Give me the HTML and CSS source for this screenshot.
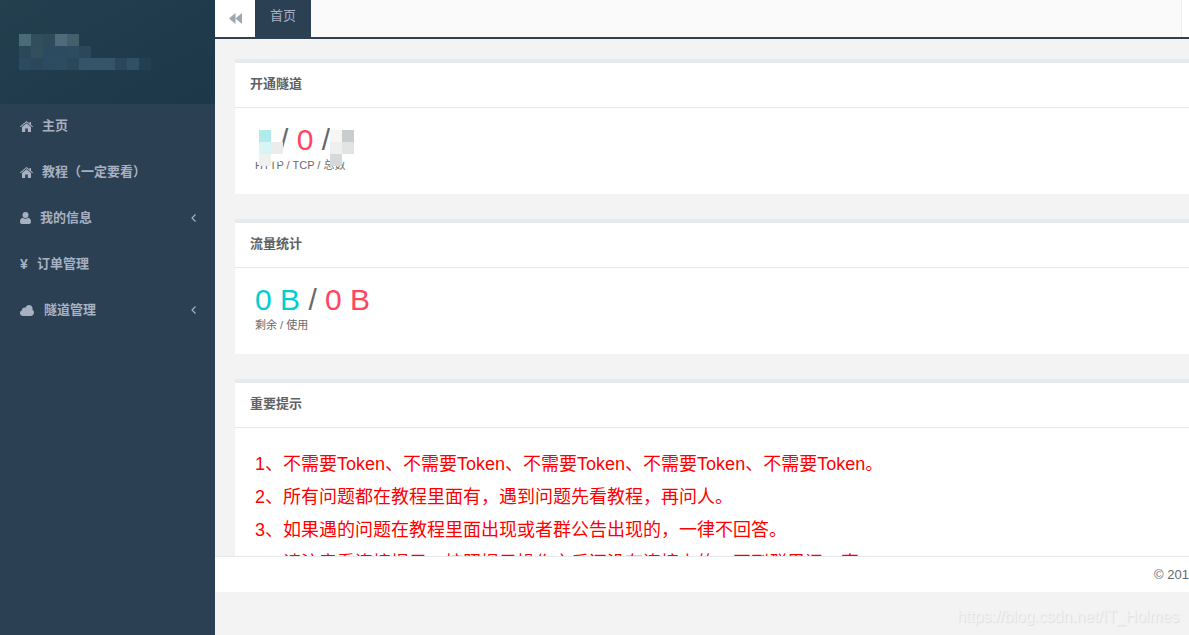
FILE: index.html
```html
<!DOCTYPE html>
<html lang="zh-CN">
<head>
  <meta charset="UTF-8">
  <title>首页</title>
  <link rel="stylesheet" href="styles.css">
</head>
<body>
  <div class="wrapper">
    <nav class="sidebar">
      <div class="logo">
        <div class="mosaic">
          <i class="m1"></i><i class="m2"></i><i class="m3"></i><i class="m4"></i><i class="m5"></i><i class="m0"></i><i class="m0"></i><i class="m0"></i><i class="m0"></i><i class="m0"></i><i class="m0"></i>
          <i class="m6"></i><i class="m7"></i><i class="m8"></i><i class="m8"></i><i class="m9"></i><i class="m10"></i><i class="m0"></i><i class="m0"></i><i class="m0"></i><i class="m0"></i><i class="m0"></i>
          <i class="m8"></i><i class="m10"></i><i class="m8"></i><i class="m9"></i><i class="m10"></i><i class="m11"></i><i class="m11"></i><i class="m11"></i><i class="m10"></i><i class="m12"></i><i class="m13"></i>
        </div>
      </div>
      <ul class="menu">
        <li>
          <svg class="icon" width="13" height="11" viewBox="0 0 13 11"><path d="M6.5 0 9.6 2.6V1H11V3.8L13 5.5 12.4 6.2 6.5 1.3 .6 6.2 0 5.5ZM6.5 2.3 11 6V11H7.8V7.6H5.2V11H2V6Z"/></svg>
          <span class="label label-home">主页</span>
        </li>
        <li>
          <svg class="icon" width="13" height="11" viewBox="0 0 13 11"><path d="M6.5 0 9.6 2.6V1H11V3.8L13 5.5 12.4 6.2 6.5 1.3 .6 6.2 0 5.5ZM6.5 2.3 11 6V11H7.8V7.6H5.2V11H2V6Z"/></svg>
          <span class="label label-home">教程（一定要看）</span>
        </li>
        <li>
          <svg class="icon" width="11" height="12" viewBox="0 0 11 12"><circle cx="5.5" cy="3" r="3"/><path d="M0 10C0 7.5 1 6 2.8 5.7 3.5 6.3 4.4 6.7 5.5 6.7S7.500 6.300 8.200 5.700C10 6 11 7.500 11 10 11 11.300 10.200 12 9 12H2C.8 12 0 11.300 0 10Z"/></svg>
          <span class="label label-user">我的信息</span>
          <svg class="arrow" width="5" height="8" viewBox="0 0 5 8"><path d="M4.500 .5 1 4 4.500 7.500" /></svg>
        </li>
        <li>
          <span class="yen">¥</span>
          <span class="label label-yen">订单管理</span>
        </li>
        <li>
          <svg class="icon" width="14" height="11" viewBox="0 0 14 11"><path d="M3.200 11C1.400 11 0 9.700 0 8 0 6.700.8 5.600 2 5.200 2 5 2 4.900 2 4.700 2 3.400 3.100 2.400 4.400 2.400 4.800 2.400 5.200 2.500 5.500 2.700 6.100 1.100 7.500 0 9.100 0 11 0 12.600 1.600 12.600 3.500 12.600 3.900 12.500 4.300 12.400 4.700 13.400 5.300 14 6.300 14 7.500 14 9.400 12.400 11 10.500 11Z"/></svg>
          <span class="label label-cloud">隧道管理</span>
          <svg class="arrow" width="5" height="8" viewBox="0 0 5 8"><path d="M4.500 .5 1 4 4.500 7.500" /></svg>
        </li>
      </ul>
    </nav>

    <div class="page">
      <header class="tabbar">
        <button class="collapse">
          <svg width="13" height="11" viewBox="0 0 13 11"><path d="M6.500 0V11L0 5.500ZM13 0V11L6.500 5.500Z"/></svg>
        </button>
        <a class="tab">首页</a>
        <div class="tab-rest"></div>
        <div class="tab-end"></div>
      </header>

      <main class="content">
        <section class="card">
          <h5 class="card-title">开通隧道</h5>
          <div class="card-body stats">
            <div class="big"><span class="blur blur-cyan"><i class="c1"></i><i class="c0"></i><i class="c2"></i><i class="c4"></i><i class="c3"></i></span><span class="sep">/</span> <span class="red">0</span> <span class="sep">/</span><span class="blur blur-grey"><i class="g0"></i><i class="g1"></i><i class="g2"></i><i class="g4"></i><i class="g3"></i></span></div>
            <small>HTTP / TCP / 总数</small>
          </div>
        </section>

        <section class="card">
          <h5 class="card-title">流量统计</h5>
          <div class="card-body stats">
            <div class="big"><span class="cyan">0 B</span> <span class="sep">/</span> <span class="red">0 B</span></div>
            <small>剩余 / 使用</small>
          </div>
        </section>

        <section class="card">
          <h5 class="card-title">重要提示</h5>
          <div class="card-body notice">
            <p>1、不需要Token、不需要Token、不需要Token、不需要Token、不需要Token。</p>
            <p>2、所有问题都在教程里面有，遇到问题先看教程，再问人。</p>
            <p>3、如果遇的问题在教程里面出现或者群公告出现的，一律不回答。</p>
            <p>4、请注意看连接提示，按照提示操作之后还没有连接上的，再到群里问一声。</p>
          </div>
        </section>
      </main>

      <footer class="footer">
        <span class="copy">© 2019</span>
      </footer>
      <div class="below"></div>
    </div>
  </div>
  <div class="watermark">https://blog.csdn.net/IT_Holmes</div>
</body>
</html>
```

FILE: styles.css
```css
* {
  box-sizing: border-box;
}

html, body {
  margin: 0;
  padding: 0;
  height: 100%;
  overflow: hidden;
  background-color: #f3f3f4;
  font-family: "Liberation Sans", "Noto Sans CJK SC", sans-serif;
  font-size: 13px;
  color: #676a6c;
}

.wrapper {
  display: flex;
  height: 635px;
}

/* sidebar */
.sidebar {
  width: 215px;
  flex: none;
  background-color: #2b4053;
}

.logo {
  height: 104px;
  padding: 34px 0 0 19px;
  background: linear-gradient(150deg, #24404f 0%, #1f3a4b 60%, #1d3849 100%);
}

.mosaic {
  display: grid;
  grid-template-columns: repeat(11, 12px);
  grid-auto-rows: 12px;
}

.m0 { background-color: transparent; }
.m1 { background-color: #4a6b78; }
.m2 { background-color: #314e5c; }
.m3 { background-color: #2f4a58; }
.m4 { background-color: #506a7c; }
.m5 { background-color: #445f6b; }
.m6 { background-color: #2a4858; }
.m7 { background-color: #334f5d; }
.m8 { background-color: #2d4b60; }
.m9 { background-color: #2e4c5f; }
.m10 { background-color: #2b485b; }
.m11 { background-color: #365469; }
.m12 { background-color: #2f5066; }
.m13 { background-color: #233f50; }

.menu {
  list-style: none;
  margin: 0;
  padding: 0;
}

.menu li {
  display: flex;
  align-items: center;
  height: 46px;
  padding: 0 19px 2px 20px;
  color: #a7b1c2;
  font-weight: bold;
  line-height: 18px;
}

.icon {
  flex: none;
  fill: #a7b1c2;
}

.label-home { margin-left: 9px; }
.label-user { margin-left: 9px; }
.label-yen { margin-left: 10px; }
.label-cloud { margin-left: 10px; }

.yen {
  width: 7px;
  font-size: 14px;
}

.arrow {
  margin-left: auto;
  fill: none;
  stroke: #a7b1c2;
  stroke-width: 1.2;
}

/* top tabs */
.page {
  flex: 1;
  min-width: 0;
  display: flex;
  flex-direction: column;
}

.tabbar {
  display: flex;
  flex: none;
  height: 39px;
  border-bottom: 2px solid #2f4050;
  background-color: #fafafa;
}

.collapse {
  width: 40px;
  padding: 0;
  border: none;
  background-color: #fff;
  display: flex;
  align-items: center;
  justify-content: center;
}

.collapse svg {
  fill: #9ea6b0;
}

.tab {
  width: 56px;
  background-color: #2b4053;
  color: #a7b1c2;
  text-align: center;
  line-height: 31px;
}

.tab-rest {
  flex: 1;
  border-right: 1px solid #eee;
}

.tab-end {
  width: 7px;
  background-color: #fff;
}

/* cards */
.content {
  height: 517px;
  flex: none;
  overflow: hidden;
  padding: 20px 0 0 20px;
}

.card {
  width: 1100px;
  margin-bottom: 25px;
  background-color: #fff;
  border-top: 4px solid #e7eaec;
}

.card-title {
  margin: 0;
  height: 45px;
  padding: 12px 15px 0;
  border-bottom: 1px solid #e7eaec;
  font-size: 13px;
  font-weight: bold;
  line-height: 18px;
  color: #5e6264;
}

.stats {
  height: 86px;
  padding: 14px 20px 0;
}

.big {
  height: 36px;
  font-size: 30px;
  line-height: 36px;
  white-space: nowrap;
}

small {
  display: block;
  margin-top: 0;
  font-size: 11px;
  line-height: 14px;
}

.sep { color: #676a6c; }
.red { color: #ff4560; }
.cyan { color: #00ced1; }

/* pixelated cover over the hidden numbers */
.blur {
  display: inline-grid;
  grid-template-columns: repeat(2, 12px);
  grid-auto-rows: 12px;
  vertical-align: top;
  height: 44px;
  margin-top: -4px;
  padding-top: 12px;
  position: relative;
  background-color: rgba(255, 255, 255, 0.85);
}

.blur i {
  display: block;
}

.blur-cyan {
  width: 25px;
  padding-left: 4px;
}

.blur-grey {
  width: 28px;
}

.c0 { background-color: transparent; }
.c1 { background-color: #b2ebec; }
.c2 { background-color: #d8f4f5; }
.c3 { background-color: #f0f1ef; }
.c4 { background-color: #ecedeb; }
.g0 { background-color: #f7f6f4; }
.g1 { background-color: #cacdcd; }
.g2 { background-color: #eeefef; }
.g4 { background-color: #e2e4e4; }
.g3 { background-color: #d6d9d9; }

.notice {
  padding: 20px 20px 0;
  color: #f00;
  font-size: 18px;
  line-height: 33px;
}

.notice p {
  margin: 0;
  white-space: nowrap;
}

/* footer */
.footer {
  flex: none;
  height: 36px;
  padding: 10px 0 0 939px;
  background-color: #fff;
  border-top: 1px solid #e7eaec;
  line-height: 16px;
  color: #676a6c;
  white-space: nowrap;
  overflow: hidden;
}

.below {
  flex: 1;
}

.watermark {
  position: absolute;
  left: 957px;
  top: 607px;
  font-size: 15.8px;
  line-height: 20px;
  color: #f3f3f4;
  text-shadow: 1px 1px 1px #dcdcdc;
}
```
